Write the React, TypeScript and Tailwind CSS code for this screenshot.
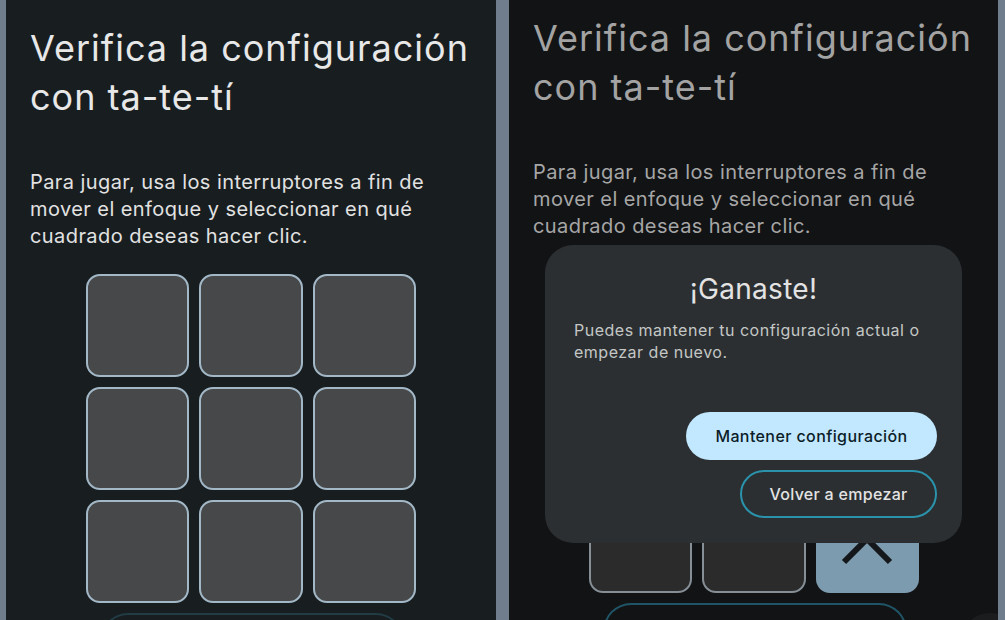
import React from 'react';

const FONT = { fontFamily: 'Inter, "Open Sans", sans-serif' };

function Cell({ selected = false, dim = false }: { selected?: boolean; dim?: boolean }) {
  if (selected) {
    return (
      <div className="relative h-[103px] rounded-[14px] bg-[#7d9bae]">
        <svg className="absolute inset-0" width="103" height="103" viewBox="0 0 103 103">
          <polyline points="28,72 51,49 74,72" fill="none" stroke="#15181a" strokeWidth="6" />
        </svg>
      </div>
    );
  }
  return (
    <div
      className={`h-[103px] rounded-[14px] border-2 ${
        dim ? 'border-[#868f96] bg-[#2b2b2c]' : 'border-[#a3b8c7] bg-[#474849]'
      }`}
    />
  );
}

function Screen({ dim = false }: { dim?: boolean }) {
  const text = dim ? 'text-[#a3a3a3]' : 'text-[#e8e8e8]';
  const body = dim ? 'text-[#a6a6a6]' : 'text-[#e2e2e2]';
  return (
    <div className={`flex flex-col pl-[24px] ${dim ? 'pt-[14px]' : 'pt-[24px]'}`} style={FONT}>
      <h1 className={`text-[36px] leading-[49px] tracking-[1px] ${text}`}>
        Verifica la configuración
        <br />
        con ta-te-tí
      </h1>
      <p className={`mt-[47px] text-[20px] leading-[27px] tracking-[0.42px] ${body}`}>
        Para jugar, usa los interruptores a fin de
        <br />
        mover el enfoque y seleccionar en qué
        <br />
        cuadrado deseas hacer clic.
      </p>
      <div className="ml-[56px] mt-[24px] grid w-[330px] grid-cols-3 gap-[10px]">
        {Array.from({ length: 9 }).map((_, i) => (
          <Cell key={i} dim={dim} selected={dim && i === 8} />
        ))}
      </div>
      <div
        className={`ml-[70px] mt-[10px] h-[40px] w-[304px] rounded-t-[28px] border-2 border-b-0 ${
          dim ? 'border-[#1f5566]' : 'border-[#223b45]'
        }`}
      />
    </div>
  );
}

function WinDialog() {
  return (
    <div
      className="absolute left-[36px] top-[245px] flex h-[298px] w-[417px] flex-col rounded-[28px] bg-[#2b2f32] px-[29px] pt-[24px]"
      style={FONT}
    >
      <h2 className="text-center text-[28px] leading-[40px] tracking-[0.3px] text-[#e3e3e3]">¡Ganaste!</h2>
      <p className="mt-[10px] text-[16px] leading-[22px] tracking-[0.5px] text-[#c4c7c5]">
        Puedes mantener tu configuración actual o
        <br />
        empezar de nuevo.
      </p>
      <div className="mt-[49px] flex flex-col items-end gap-[10px]">
        <button className="-mr-[4px] h-[48px] w-[251px] rounded-full bg-[#c2e8ff] text-[16px] font-medium tracking-[0.4px] text-[#0c1d28]">
          Mantener configuración
        </button>
        <button className="-mr-[4px] h-[48px] w-[197px] rounded-full border-2 border-[#2a93ab] text-[16px] font-medium tracking-[0.3px] text-[#e3e3e3]">
          Volver a empezar
        </button>
      </div>
    </div>
  );
}

export default function App() {
  return (
    <div className="flex h-[620px] w-[1005px] overflow-hidden bg-[#6f7d8c] pl-[6px]">
      <div className="h-full w-[490px] overflow-hidden bg-[#181d20]">
        <Screen />
      </div>
      <div className="relative ml-[13px] h-full w-[489px] overflow-hidden bg-[#121315]">
        <Screen dim />
        <WinDialog />
        <div className="absolute left-[451px] top-[613px] h-[60px] w-[60px] rounded-full bg-[#1b1c1e]" />
      </div>
    </div>
  );
}
